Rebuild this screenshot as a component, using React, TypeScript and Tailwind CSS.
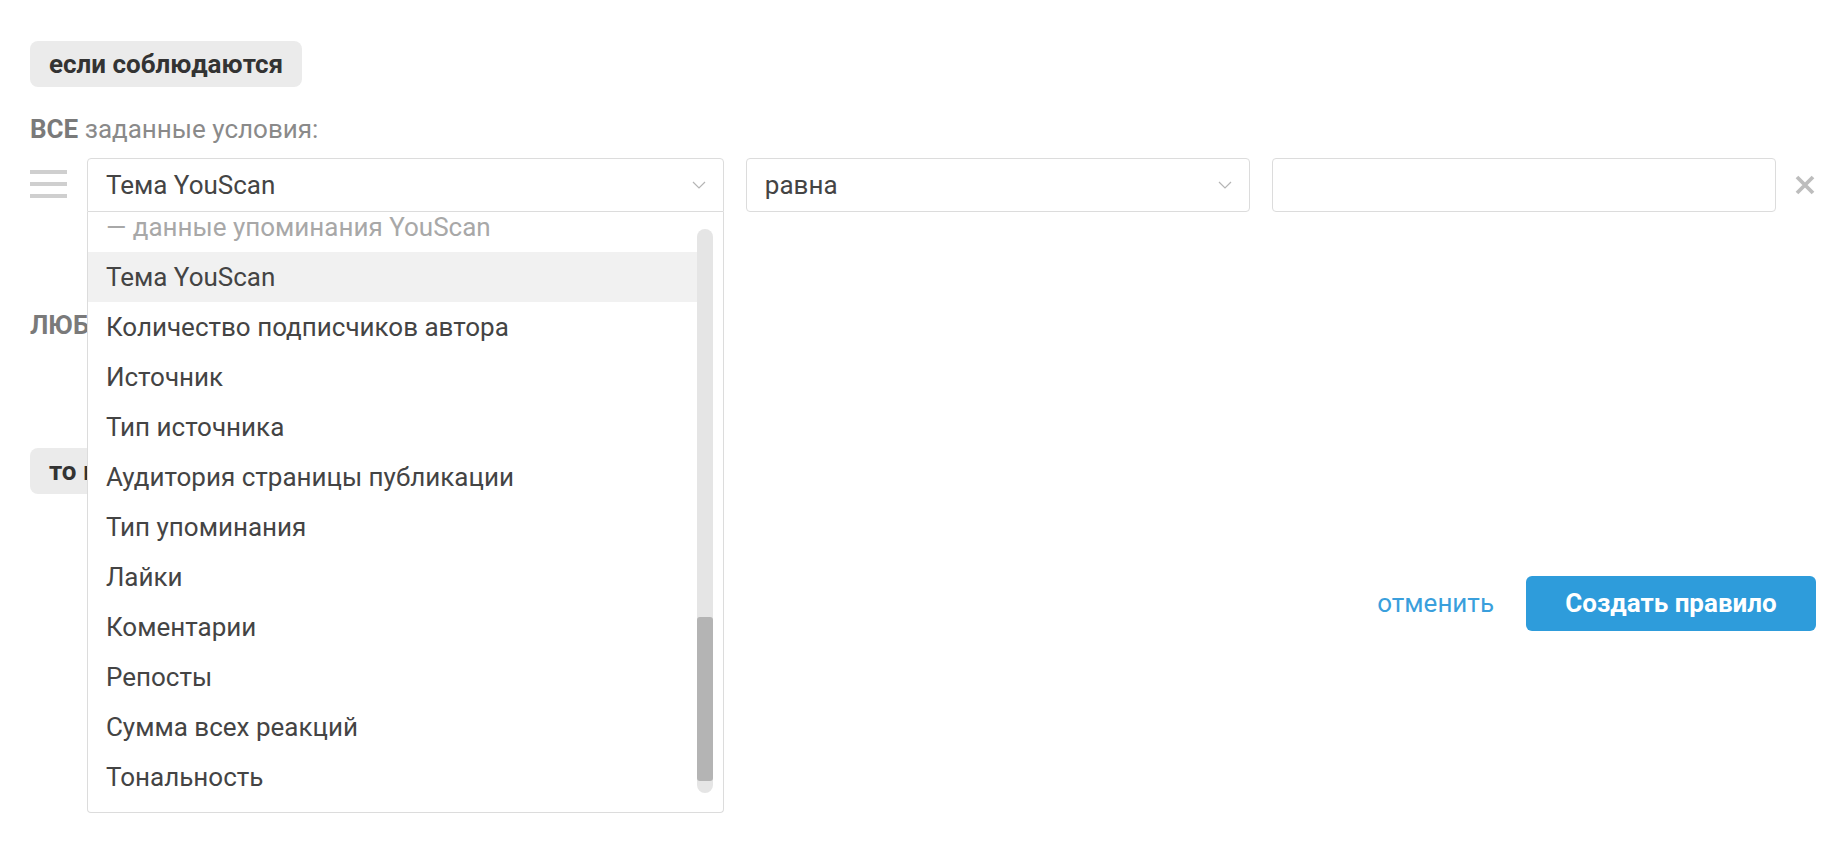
import React from "react";

const options = [
  "Тема YouScan",
  "Количество подписчиков автора",
  "Источник",
  "Тип источника",
  "Аудитория страницы публикации",
  "Тип упоминания",
  "Лайки",
  "Коментарии",
  "Репосты",
  "Сумма всех реакций",
  "Тональность",
];

function Chevron() {
  return (
    <svg width="14" height="8" viewBox="0 0 14 8" fill="none">
      <polyline points="1,1 7,7 13,1" stroke="#b5b5b5" strokeWidth="1.2" />
    </svg>
  );
}

function Hamburger() {
  return (
    <div className="flex w-[37px] flex-col gap-[8px] pt-[12px]">
      <div className="h-[4px] bg-[#cfcfcf]" />
      <div className="h-[4px] bg-[#cfcfcf]" />
      <div className="h-[4px] bg-[#cfcfcf]" />
    </div>
  );
}

function RemoveIcon() {
  return (
    <svg width="22" height="22" viewBox="0 0 22 22" fill="none">
      <path d="M3 3 L19 19 M19 3 L3 19" stroke="#bdbdbd" strokeWidth="3.8" />
    </svg>
  );
}

function FieldDropdown() {
  return (
    <div className="absolute left-0 top-full z-10 flex h-[601px] w-full overflow-hidden rounded-b-[4px] border border-t-0 border-[#dcdcdc] bg-white">
      <div className="flex-1 overflow-hidden">
        <div className="-mt-[10px]">
          <div className="flex h-[50px] items-center pl-[18px] text-[26px] text-[#a8a8a8]">
            — данные упоминания YouScan
          </div>
          {options.map((o, i) => (
            <div
              key={o}
              className={
                i === 0
                  ? "flex h-[50px] items-center bg-[#f1f1f1] pl-[18px] text-[26px] text-[#444]"
                  : "flex h-[50px] items-center pl-[18px] text-[26px] text-[#444]"
              }
            >
              {o}
            </div>
          ))}
        </div>
      </div>
      <div className="mr-[10px] mt-[17px] flex h-[564px] w-[16px] flex-col rounded-full bg-[#e5e5e5]">
        <div className="h-[388px]" />
        <div className="h-[164px] rounded-[3px] bg-[#b4b4b4]" />
      </div>
    </div>
  );
}

export default function App() {
  return (
    <div
      className="h-[854px] w-full bg-white px-[30px] pt-[41px] text-[#444]"
      style={{ fontFamily: "Roboto, 'Noto Sans', sans-serif" }}
    >
      <div className="inline-flex h-[46px] items-center rounded-[8px] bg-[#ebebeb] px-[19px] text-[26px] font-bold text-[#333]">
        если соблюдаются
      </div>

      <div className="mt-[27px] h-[30px] text-[26px] leading-[30px] text-[#8a8a8a]">
        <span className="font-bold text-[#7a7a7a]">ВСЕ</span> заданные условия:
      </div>

      <div className="mt-[14px] flex items-start">
        <Hamburger />
        <div className="relative ml-[20px] w-[638px]">
          <div className="flex h-[54px] items-center justify-between rounded-t-[4px] border border-[#dcdcdc] pl-[18px] pr-[17px] text-[26px]">
            <span>Тема YouScan</span>
            <Chevron />
          </div>
          <FieldDropdown />
        </div>
        <div className="ml-[22px] flex h-[54px] w-[505px] items-center justify-between rounded-[4px] border border-[#dcdcdc] pl-[18px] pr-[17px] text-[26px]">
          <span>равна</span>
          <Chevron />
        </div>
        <div className="ml-[22px] h-[54px] w-[505px] rounded-[4px] border border-[#dcdcdc]" />
        <div className="ml-[18px] flex h-[54px] items-center">
          <RemoveIcon />
        </div>
      </div>

      <div className="mt-[98px] h-[30px] text-[26px] leading-[30px] text-[#8a8a8a]">
        <span className="font-bold text-[#7a7a7a]">ЛЮБЫЕ</span> из заданных условий:
      </div>

      <div className="mt-[108px] inline-flex h-[46px] items-center rounded-[8px] bg-[#ebebeb] px-[19px] text-[26px] font-bold text-[#333]">
        то выполнить
      </div>

      <div className="mt-[82px] flex items-center justify-end gap-[32px]">
        <span className="text-[26px] text-[#3a9fdc]">отменить</span>
        <button className="h-[55px] w-[290px] rounded-[6px] bg-[#2e9cdb] text-[26px] font-bold text-white">
          Создать правило
        </button>
      </div>
    </div>
  );
}
